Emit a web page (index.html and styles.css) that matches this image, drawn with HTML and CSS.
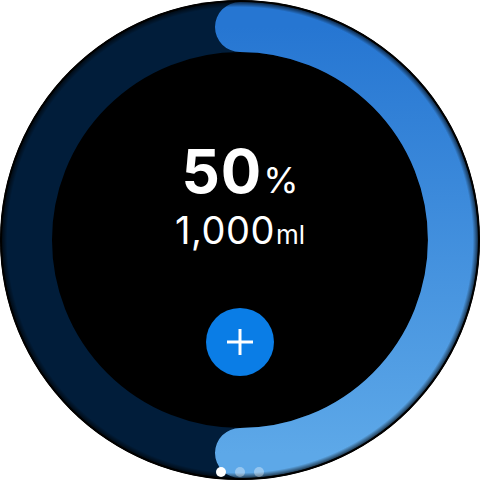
FILE: index.html
```html
<!DOCTYPE html>
<html lang="en">
<head>
<meta charset="utf-8">
<title>Water</title>
<link rel="stylesheet" href="styles.css">
</head>
<body>
<div class="watch">
  <svg class="ring" viewBox="0 0 480 480" width="480" height="480" aria-hidden="true">
    <defs>
      <linearGradient id="prog" x1="0" y1="0" x2="0" y2="1">
        <stop offset="0" stop-color="#2676d2"/>
        <stop offset="1" stop-color="#5da8e8"/>
      </linearGradient>
      <radialGradient id="edge" cx="240" cy="240" r="240" gradientUnits="userSpaceOnUse">
        <stop offset="0.97" stop-color="#000" stop-opacity="0"/>
        <stop offset="0.99" stop-color="#000" stop-opacity="0.6"/>
        <stop offset="0.995" stop-color="#000" stop-opacity="1"/>
      </radialGradient>
    </defs>
    <circle cx="240" cy="240" r="213" fill="none" stroke="#011d3a" stroke-width="50"/>
    <path d="M240 27 A213 213 0 0 1 240 453" fill="none" stroke="url(#prog)" stroke-width="50" stroke-linecap="round"/>
    <circle cx="240" cy="240" r="240" fill="url(#edge)"/>
  </svg>
  <div class="content">
    <div class="percent"><span class="num">50</span><span class="unit">%</span></div>
    <div class="volume"><span class="vnum">1,000</span><span class="vunit">ml</span></div>
    <button class="add" type="button" aria-label="Add">
      <svg viewBox="0 0 28 28" width="28" height="28"><path d="M14 1v26M1 14h26" stroke="#fff" stroke-width="3" fill="none"/></svg>
    </button>
    <div class="dots"><span class="dot on"></span><span class="dot"></span><span class="dot"></span></div>
  </div>
</div>
</body>
</html>
```
FILE: styles.css
```css
html, body {
  margin: 0;
  padding: 0;
  background: #fff;
}
.watch {
  width: 480px;
  height: 480px;
  border-radius: 50%;
  background: #000;
  display: grid;
  overflow: hidden;
}
.ring {
  grid-area: 1 / 1;
  display: block;
}
.content {
  grid-area: 1 / 1;
  display: flex;
  flex-direction: column;
  align-items: center;
  color: #fff;
  font-family: Inter, "Noto Sans", sans-serif;
  padding-top: 136px;
}
.percent {
  display: flex;
  align-items: baseline;
  line-height: 70px;
  height: 70px;
}
.num {
  font-size: 60px;
  font-weight: 700;
  letter-spacing: 1px;
}
.unit {
  font-size: 36px;
  font-weight: 400;
  margin-left: 1px;
}
.volume {
  display: flex;
  align-items: baseline;
  line-height: 40px;
  height: 40px;
  margin-top: 4px;
}
.vnum {
  font-size: 38px;
  font-weight: 400;
  letter-spacing: 0.5px;
}
.vunit {
  font-size: 26px;
  margin-left: 1px;
}
.add {
  margin-top: 58px;
  width: 68px;
  height: 68px;
  border: none;
  border-radius: 50%;
  background: #0a7de6;
  display: flex;
  align-items: center;
  justify-content: center;
  padding: 0;
}
.add svg {
  display: block;
}
.dots {
  margin-top: 91px;
  display: flex;
  gap: 9px;
}
.dot {
  width: 10px;
  height: 10px;
  border-radius: 50%;
  background: rgba(255, 255, 255, 0.35);
}
.dot.on {
  background: #fff;
}
```
